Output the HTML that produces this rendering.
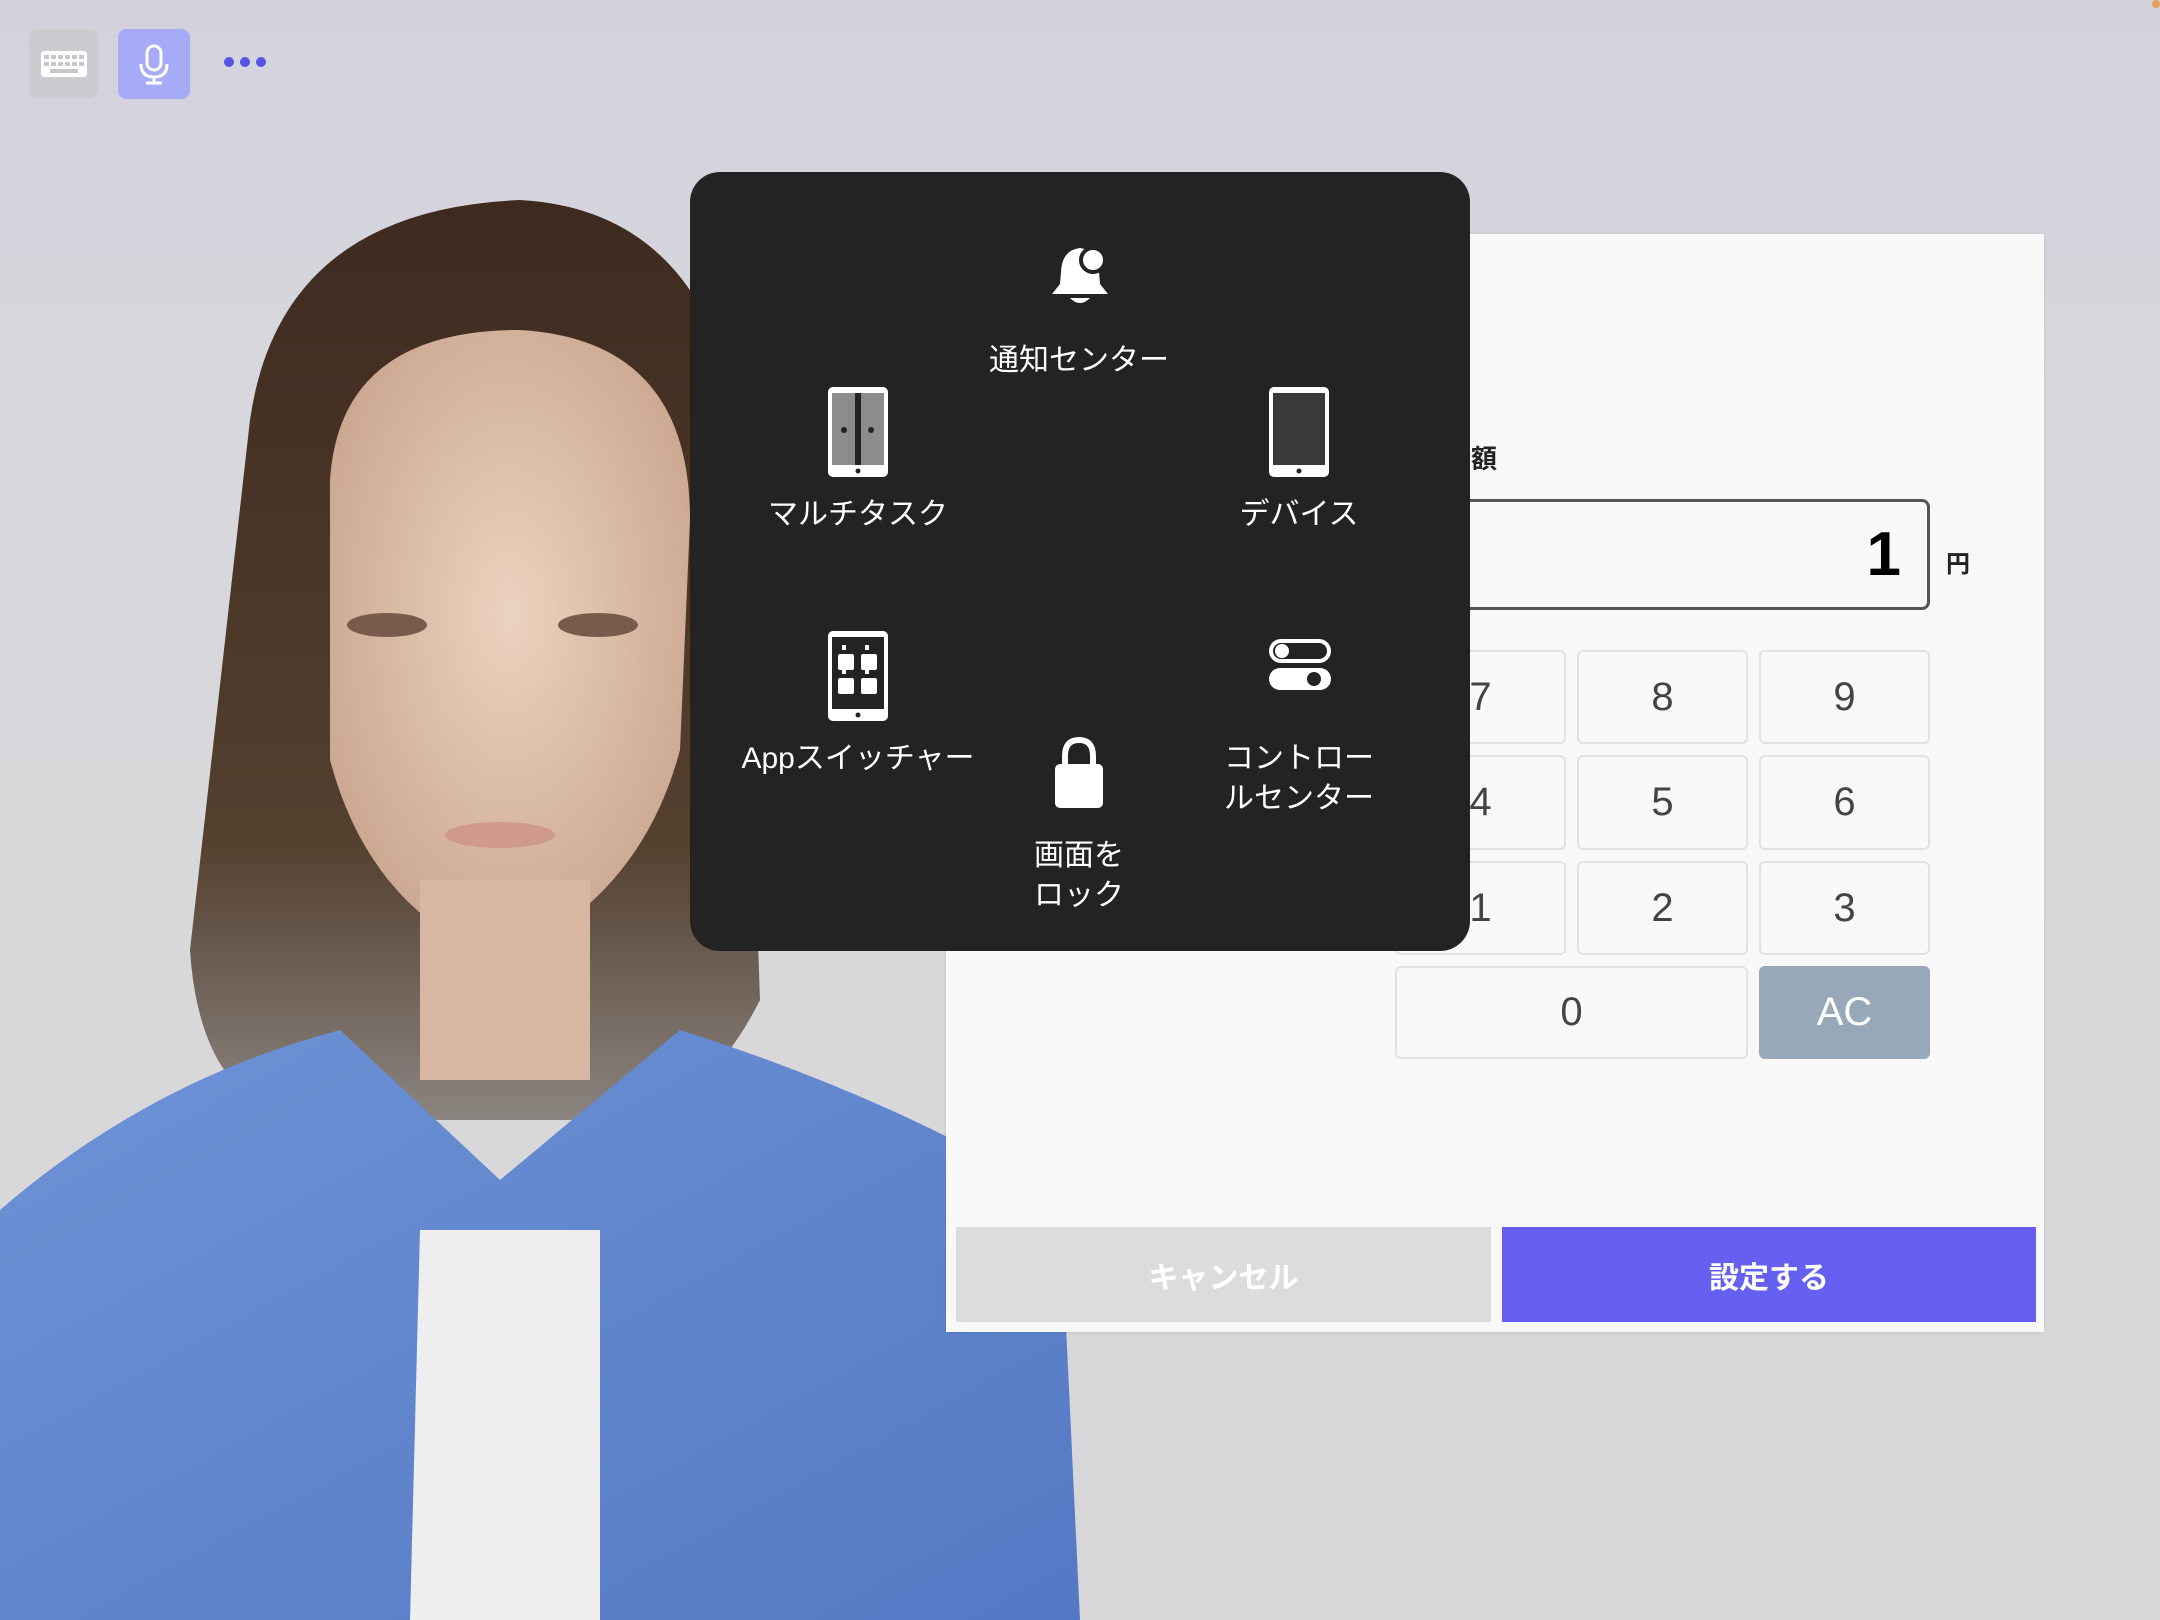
<!DOCTYPE html>
<html><head><meta charset="utf-8"><style>
*{margin:0;padding:0;box-sizing:border-box}
body{width:2160px;height:1620px;overflow:hidden;position:relative;background:linear-gradient(180deg,#d3d1dc 0%,#d8d8dc 30%,#d7d7d9 100%);font-family:"Liberation Sans","Noto Sans CJK JP",sans-serif}
.abs{position:absolute}
.panel{left:690px;top:172px;width:780px;height:779px;background:#232323;border-radius:30px}
.lbl{position:absolute;color:#fff;font-size:30px;text-align:center;line-height:40px;transform:translateX(-50%);white-space:nowrap}
.dlg{left:946px;top:234px;width:1098px;height:1098px;background:#f8f8f8;box-shadow:0 0 4px rgba(0,0,0,.1)}
.key{position:absolute;background:#f9f9f9;border:2px solid #e2e2e2;border-radius:6px;font-size:40px;color:#444;display:flex;align-items:center;justify-content:center}
</style></head><body>
<svg class="abs" style="left:0;top:0" width="1100" height="1620" viewBox="0 0 1100 1620">
<defs>
<radialGradient id="sk" cx="50%" cy="45%" r="60%"><stop offset="0" stop-color="#ecd3bf"/><stop offset="1" stop-color="#c9a48d"/></radialGradient>
<linearGradient id="hr" x1="0" y1="0" x2="0" y2="1"><stop offset="0" stop-color="#3e2a1f"/><stop offset=".7" stop-color="#54402f"/><stop offset="1" stop-color="#8a8480"/></linearGradient>
<linearGradient id="jk" x1="0" y1="0" x2="1" y2="1"><stop offset="0" stop-color="#6e93d6"/><stop offset="1" stop-color="#5578c4"/></linearGradient>
</defs>
<path d="M250 420 Q280 210 520 200 Q700 210 740 420 L760 1000 Q700 1120 600 1120 L300 1120 Q200 1100 190 950 Z" fill="url(#hr)"/>
<path d="M330 480 Q340 330 520 330 Q690 340 690 520 L680 750 Q640 900 500 960 Q370 910 330 760 Z" fill="url(#sk)"/>
<rect x="420" y="880" width="170" height="200" fill="#d8b7a2"/>
<path d="M0 1210 Q150 1080 340 1030 L500 1180 L680 1030 Q900 1100 1060 1200 L1080 1620 L0 1620 Z" fill="url(#jk)"/>
<path d="M420 1230 L600 1230 L600 1620 L410 1620 Z" fill="#eeeeef"/>
<ellipse cx="387" cy="625" rx="40" ry="12" fill="#7a5a4a"/><ellipse cx="598" cy="625" rx="40" ry="12" fill="#7a5a4a"/>
<ellipse cx="500" cy="835" rx="55" ry="13" fill="#d09a8a"/>
</svg>
<div class="abs" style="left:29px;top:29px;width:69px;height:69px;background:#cbcbd0;border-radius:8px"></div>
<svg class="abs" style="left:40px;top:50px" width="48" height="28" viewBox="0 0 48 28"><rect x="1" y="1" width="46" height="26" rx="3" fill="#fff"/><g fill="#c8c8cc"><rect x="4" y="5" width="5" height="4"/><rect x="11" y="5" width="5" height="4"/><rect x="18" y="5" width="5" height="4"/><rect x="25" y="5" width="5" height="4"/><rect x="32" y="5" width="5" height="4"/><rect x="39" y="5" width="5" height="4"/><rect x="4" y="12" width="5" height="4"/><rect x="11" y="12" width="5" height="4"/><rect x="18" y="12" width="5" height="4"/><rect x="25" y="12" width="5" height="4"/><rect x="32" y="12" width="5" height="4"/><rect x="39" y="12" width="5" height="4"/><rect x="10" y="19" width="28" height="4"/></g></svg>
<div class="abs" style="left:118px;top:29px;width:72px;height:70px;background:#a6abf7;border-radius:8px"></div>
<svg class="abs" style="left:136px;top:44px" width="36" height="42" viewBox="0 0 36 42"><rect x="11" y="2" width="14" height="24" rx="7" fill="none" stroke="#fff" stroke-width="3"/><path d="M5 20 Q5 33 18 33 Q31 33 31 20 M18 33 V39 M10 39 H26" fill="none" stroke="#fff" stroke-width="3"/></svg>
<div class="abs" style="left:224px;top:57px;width:10px;height:10px;border-radius:5px;background:#5552e6"></div>
<div class="abs" style="left:240px;top:57px;width:10px;height:10px;border-radius:5px;background:#5552e6"></div>
<div class="abs" style="left:256px;top:57px;width:10px;height:10px;border-radius:5px;background:#5552e6"></div>

<div class="abs dlg">
 <div class="abs" style="left:499px;top:205px;font-size:26px;font-weight:bold;color:#222">金額</div>
 <div class="abs" style="left:449px;top:265px;width:535px;height:111px;border:3px solid #555;border-radius:8px;background:#f9f9f9;font-size:62px;font-weight:bold;text-align:right;padding-right:26px;line-height:105px;color:#000">1</div>
 <div class="abs" style="left:1000px;top:310px;font-size:24px;font-weight:bold;color:#222">円</div>
 <div class="key" style="left:449px;top:416px;width:171px;height:94px">7</div>
 <div class="key" style="left:631px;top:416px;width:171px;height:94px">8</div>
 <div class="key" style="left:813px;top:416px;width:171px;height:94px">9</div>
 <div class="key" style="left:449px;top:521px;width:171px;height:95px">4</div>
 <div class="key" style="left:631px;top:521px;width:171px;height:95px">5</div>
 <div class="key" style="left:813px;top:521px;width:171px;height:95px">6</div>
 <div class="key" style="left:449px;top:627px;width:171px;height:94px">1</div>
 <div class="key" style="left:631px;top:627px;width:171px;height:94px">2</div>
 <div class="key" style="left:813px;top:627px;width:171px;height:94px">3</div>
 <div class="key" style="left:449px;top:732px;width:353px;height:93px">0</div>
 <div class="key" style="left:813px;top:732px;width:171px;height:93px;background:#97a8b9;border-color:#97a8b9;color:#fff">AC</div>
 <div class="abs" style="left:10px;top:993px;width:535px;height:95px;background:#dcdcde;color:#fff;font-size:30px;font-weight:bold;display:flex;align-items:center;justify-content:center">キャンセル</div>
 <div class="abs" style="left:556px;top:993px;width:534px;height:95px;background:#6560f2;color:#fff;font-size:30px;font-weight:bold;display:flex;align-items:center;justify-content:center">設定する</div>
</div>

<div class="abs panel">
 <svg class="abs" style="left:358px;top:70px" width="64" height="66" viewBox="0 0 64 66"><path d="M32 6 Q14 8 13 30 L12 42 L4 52 L60 52 L52 42 L51 30 Q50 8 32 6 Z" fill="#fff"/><path d="M22 56 Q32 66 42 56 Z" fill="#fff"/><circle cx="45" cy="18" r="12" fill="#fff" stroke="#232323" stroke-width="4"/></svg>
 <div class="lbl" style="left:389px;top:169px">通知センター</div>
 <svg class="abs" style="left:137px;top:214px" width="62" height="92" viewBox="0 0 62 92"><rect x="1" y="1" width="60" height="90" rx="5" fill="#fff"/><rect x="5" y="7" width="52" height="72" fill="#8c8c8c"/><rect x="28" y="7" width="6" height="72" fill="#232323"/><circle cx="17" cy="44" r="3" fill="#232323"/><circle cx="44" cy="44" r="3" fill="#232323"/><circle cx="31" cy="85" r="2.5" fill="#232323"/></svg>
 <div class="lbl" style="left:168px;top:323px">マルチタスク</div>
 <svg class="abs" style="left:578px;top:214px" width="62" height="92" viewBox="0 0 62 92"><rect x="1" y="1" width="60" height="90" rx="5" fill="#fff"/><rect x="5" y="7" width="52" height="72" fill="#3a3a3a"/><circle cx="31" cy="85" r="2.5" fill="#232323"/></svg>
 <div class="lbl" style="left:609px;top:323px">デバイス</div>
 <svg class="abs" style="left:137px;top:458px" width="62" height="92" viewBox="0 0 62 92"><rect x="1" y="1" width="60" height="90" rx="5" fill="#fff"/><rect x="5" y="7" width="52" height="72" fill="#232323"/><rect x="11" y="24" width="16" height="16" rx="2" fill="#fff"/><rect x="34" y="24" width="16" height="16" rx="2" fill="#fff"/><rect x="11" y="48" width="16" height="16" rx="2" fill="#fff"/><rect x="34" y="48" width="16" height="16" rx="2" fill="#fff"/><rect x="15" y="15" width="4" height="5" fill="#fff"/><rect x="38" y="15" width="4" height="5" fill="#fff"/><rect x="15" y="39" width="4" height="5" fill="#fff"/><rect x="38" y="39" width="4" height="5" fill="#fff"/><circle cx="31" cy="85" r="2.5" fill="#232323"/></svg>
 <div class="lbl" style="left:168px;top:567px">Appスイッチャー</div>
 <svg class="abs" style="left:578px;top:466px" width="64" height="52" viewBox="0 0 64 52"><rect x="3" y="3" width="58" height="20" rx="10" fill="none" stroke="#fff" stroke-width="4"/><circle cx="14" cy="13" r="7" fill="#fff"/><rect x="1" y="30" width="62" height="22" rx="11" fill="#fff"/><circle cx="46" cy="41" r="7" fill="#232323"/></svg>
 <div class="lbl" style="left:609px;top:567px">コントロー<br>ルセンター</div>
 <svg class="abs" style="left:363px;top:564px" width="52" height="74" viewBox="0 0 52 74"><path d="M12 30 V20 Q12 4 26 4 Q40 4 40 20 V30" fill="none" stroke="#fff" stroke-width="6"/><rect x="2" y="28" width="48" height="44" rx="5" fill="#fff"/></svg>
 <div class="lbl" style="left:389px;top:664px">画面を<br>ロック</div>
</div>
<div class="abs" style="left:2152px;top:0;width:8px;height:8px;background:#e8a05a;border-radius:4px"></div>
</body></html>
